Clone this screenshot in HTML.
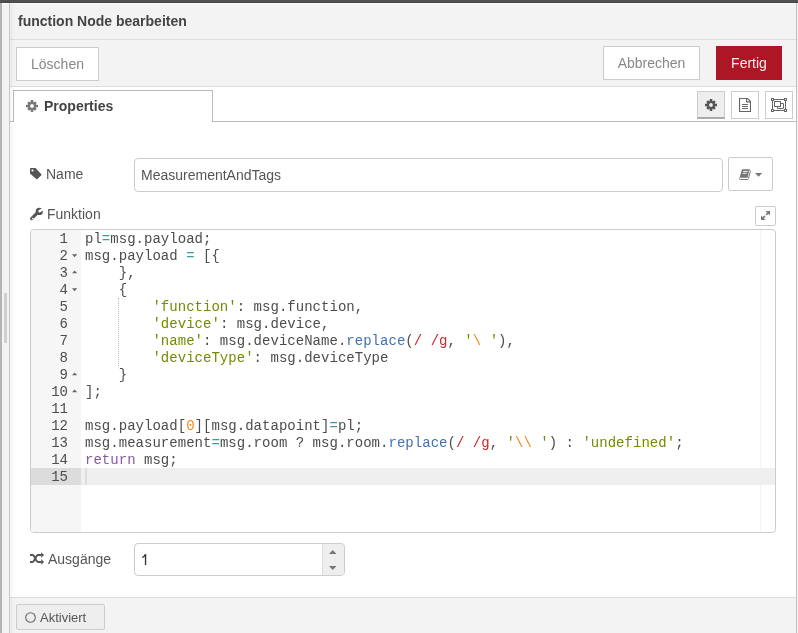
<!DOCTYPE html>
<html><head><meta charset="utf-8">
<style>
*{box-sizing:border-box}
html,body{margin:0;padding:0;width:798px;height:633px;overflow:hidden;background:#f3f3f3;font-family:"Liberation Sans",sans-serif;font-size:14px;color:#555}
.abs{position:absolute}
#topbar{left:0;top:0;width:798px;height:3px;background:#505050}
#lstrip{left:0;top:3px;width:2px;height:630px;background:#b4b4b4}
#lgrip{left:4px;top:293px;width:3px;height:50px;background:#cfcfcf}
#lborder{left:9px;top:3px;width:1px;height:630px;background:#c8c8c8}
#rborder{left:796px;top:3px;width:1px;height:630px;background:#c0c0c0}
#panel{left:10px;top:3px;width:786px;height:630px;background:#f3f3f3}
#hdr{left:10px;top:3px;width:786px;height:37px;border-bottom:1px solid #ddd;background:#f3f3f3}
#title{left:18px;top:13px;font-weight:bold;font-size:14px;color:#444;line-height:16px}
#tool{left:10px;top:40px;width:786px;height:47px;border-bottom:1px solid #ddd;background:#f3f3f3}
.btn{position:absolute;border:1px solid #ccc;background:#fff;color:#888;font-size:14px;text-align:center}
#body{left:10px;top:87px;width:786px;height:510px;background:#fff}
#footer{left:10px;top:597px;width:786px;height:36px;border-top:1px solid #ddd;background:#f3f3f3}
.lbl{position:absolute;font-size:14px;color:#555;line-height:16px;white-space:nowrap}
.tline{left:10px;top:121px;width:786px;height:1px;background:#bbb}
#tab{left:13px;top:90px;width:200px;height:32px;border:1px solid #bbb;border-bottom:none;background:#fff}
.tbtn{position:absolute;top:91px;width:28px;height:28px;border:1px solid #ccc;background:#fff}
.inp{position:absolute;border:1px solid #ccc;border-radius:4px;background:#fff}
#ed{left:30px;top:229px;width:746px;height:304px;border:1px solid #ccc;border-radius:4px;background:#fff;overflow:hidden}
#gut{left:0;top:0;width:50px;height:302px;background:#f6f6f6}
.code{position:absolute;left:54px;margin-top:1px;letter-spacing:0.028px;font-family:"Liberation Mono",monospace;font-size:14px;line-height:17px;color:#4d4d4c;white-space:pre}
.gn{position:absolute;left:0;margin-top:1px;width:37px;text-align:right;font-family:"Liberation Mono",monospace;font-size:14px;line-height:17px;color:#4d4d4c}
.s{color:#718c00}.e{color:#f5871f}.r{color:#c82829}.f{color:#4271ae}.o{color:#3e999f}.k{color:#8959a8}.n{color:#f5871f}
</style></head><body><div id="root" style="position:absolute;left:0;top:0;width:798px;height:633px;will-change:transform">
<div class="abs" id="panel"></div>
<div class="abs" id="topbar"></div>
<div class="abs" id="lstrip"></div>
<div class="abs" id="lgrip"></div>
<div class="abs" id="lborder"></div>
<div class="abs" id="rborder"></div>
<div class="abs" id="hdr"></div>
<div class="abs" id="title">function Node bearbeiten</div>
<div class="abs" id="tool"></div>
<div class="btn" style="left:16px;top:47px;width:83px;height:34px;line-height:32px">Löschen</div>
<div class="btn" style="left:603px;top:46px;width:97px;height:34px;line-height:32px">Abbrechen</div>
<div class="btn" style="left:716px;top:46px;width:66px;height:34px;line-height:32px;background:#ad1625;border-color:#ad1625;color:#eee">Fertig</div>
<div class="abs" id="body"></div>
<div class="abs tline"></div>
<div class="abs" id="tab"></div>
<svg class="abs" style="left:26px;top:100px" width="12" height="12" viewBox="0 0 12 12"><g fill="#777"><circle cx="6" cy="6" r="4.1"/><rect x="4.75" y="0" width="2.5" height="12"/><rect x="0" y="4.75" width="12" height="2.5"/><rect x="4.75" y="0.5" width="2.5" height="11" transform="rotate(45 6 6)"/><rect x="4.75" y="0.5" width="2.5" height="11" transform="rotate(-45 6 6)"/></g><circle cx="6" cy="6" r="1.9" fill="#fff"/></svg>
<div class="lbl" style="left:44px;top:98px;font-weight:bold;color:#444">Properties</div>

<div class="tbtn" style="left:697px;background:#eee;border-bottom:2px solid #aaa"></div>
<svg class="abs" style="left:705px;top:99px" width="12" height="12" viewBox="0 0 12 12"><g fill="#555"><circle cx="6" cy="6" r="4.1"/><rect x="4.75" y="0" width="2.5" height="12"/><rect x="0" y="4.75" width="12" height="2.5"/><rect x="4.75" y="0.5" width="2.5" height="11" transform="rotate(45 6 6)"/><rect x="4.75" y="0.5" width="2.5" height="11" transform="rotate(-45 6 6)"/></g><circle cx="6" cy="6" r="1.9" fill="#eee"/></svg>
<div class="tbtn" style="left:731px"></div>
<svg class="abs" style="left:739px;top:98px" width="12" height="14" viewBox="0 0 12 14"><g fill="none" stroke="#666" stroke-width="1.1"><path d="M0.55 0.55H8.7L11.45 3.3V13.45H0.55Z"/><path d="M7.6 0.55V3.9H11.45"/></g><g stroke="#666" stroke-width="1"><path d="M3 6.5H9M3 8.5H9M3 10.5H9"/></g></svg>
<div class="tbtn" style="left:765px"></div>
<svg class="abs" style="left:771px;top:98px" width="16" height="14" viewBox="0 0 16 14"><g fill="none" stroke="#666" stroke-width="1"><path d="M1.5 1.5H14.5M1.5 12.5H14.5M1.5 1.5V12.5M14.5 1.5V12.5"/><rect x="3.5" y="3.5" width="6" height="5"/><path d="M9.5 5.5H12.5V10.5H6.5V8.5"/></g><g fill="#fff" stroke="#666" stroke-width="1"><rect x="0.5" y="0.5" width="2" height="2"/><rect x="13.5" y="0.5" width="2" height="2"/><rect x="0.5" y="11.5" width="2" height="2"/><rect x="13.5" y="11.5" width="2" height="2"/></g></svg>

<!-- Name row -->
<svg class="abs" style="left:30px;top:168px" width="12" height="12" viewBox="0 0 12 12"><path d="M0 0.4Q0 0 0.4 0H5.5L11.8 6.8L6.9 11.6L0 5.5Z" fill="#555"/><circle cx="2.5" cy="2.5" r="1.1" fill="#fff"/></svg>
<div class="lbl" style="left:46px;top:166px">Name</div>
<div class="inp" style="left:134px;top:158px;width:589px;height:34px"></div>
<div class="lbl" style="left:141px;top:167px;color:#555">MeasurementAndTags</div>
<div class="btn" style="left:728px;top:157px;width:45px;height:34px;border-radius:2px"></div>
<svg class="abs" style="left:739px;top:169px" width="12" height="11" viewBox="0 0 12 11"><path d="M3 0.3H10.5L8.6 8.7H0.6Z" fill="#777"/><path d="M0.6 8.7C0 9.6 0.4 10.5 1.3 10.5H8.8L9.4 9.6" fill="none" stroke="#777" stroke-width="1"/><path d="M10.6 0.6C11.6 1.5 11.4 2.5 11.2 3.2L9.4 9.6" fill="none" stroke="#777" stroke-width="1"/><path d="M4.2 2.5H8.8M3.6 4.3H7.6" stroke="#fff" stroke-width="0.9"/></svg>
<svg class="abs" style="left:755px;top:173px" width="8" height="4" viewBox="0 0 8 4"><path d="M0 0H7.2L3.6 3.8Z" fill="#777"/></svg>

<!-- Funktion -->
<svg class="abs" style="left:30px;top:207px" width="14" height="14" viewBox="0 0 14 14"><path d="M1.6 11.6L6.8 6.4" stroke="#555" stroke-width="3" stroke-linecap="round"/><circle cx="9.3" cy="4.4" r="3.6" fill="#555"/><path d="M9.6 4.2L14.5 1.3" stroke="#fff" stroke-width="2.6" stroke-linecap="round"/><circle cx="2.5" cy="11.5" r="0.8" fill="#fff"/></svg>
<div class="lbl" style="left:47px;top:206px">Funktion</div>
<div class="btn" style="left:755px;top:206px;width:21px;height:20px;border-radius:2px"></div>
<svg class="abs" style="left:761px;top:211px" width="9" height="9" viewBox="0 0 9 9"><g fill="#777"><path d="M4.6 0H9V4.4Z"/><path d="M0 4.6V9H4.4Z"/></g><path d="M7.5 1.5L5.1 3.9M1.5 7.5L3.9 5.1" stroke="#777" stroke-width="1.6"/></svg>

<!-- editor -->
<div class="abs" id="ed">
  <div class="abs" id="gut"></div>
  <div class="abs" style="left:729px;top:0;width:1px;height:302px;background:#f3f3f3"></div>
  <div class="abs" style="left:0;top:238px;width:50px;height:17px;background:#dcdcdc"></div>
  <div class="abs" style="left:50px;top:238px;width:700px;height:17px;background:#efefef"></div>
  <div class="abs" style="left:87px;top:68px;width:0;height:68px;border-left:1px dotted #bbb"></div>
  <div class="abs" style="left:54px;top:238px;width:2px;height:17px;background:#dddddd"></div>
  <div class="gn" style="top:0px">1</div>
  <div class="code" style="top:0px">pl<span class="o">=</span>msg.payload;</div>
  <div class="gn" style="top:17px">2</div>
  <div class="code" style="top:17px">msg.payload <span class="o">=</span> [{</div>
  <div class="gn" style="top:34px">3</div>
  <div class="code" style="top:34px">    },</div>
  <div class="gn" style="top:51px">4</div>
  <div class="code" style="top:51px">    {</div>
  <div class="gn" style="top:68px">5</div>
  <div class="code" style="top:68px">        <span class="s">'function'</span>: msg.function,</div>
  <div class="gn" style="top:85px">6</div>
  <div class="code" style="top:85px">        <span class="s">'device'</span>: msg.device,</div>
  <div class="gn" style="top:102px">7</div>
  <div class="code" style="top:102px">        <span class="s">'name'</span>: msg.deviceName.<span class="f">replace</span>(<span class="r">/ /g</span>, <span class="s">'</span><span class="e">\ </span><span class="s">'</span>),</div>
  <div class="gn" style="top:119px">8</div>
  <div class="code" style="top:119px">        <span class="s">'deviceType'</span>: msg.deviceType</div>
  <div class="gn" style="top:136px">9</div>
  <div class="code" style="top:136px">    }</div>
  <div class="gn" style="top:153px">10</div>
  <div class="code" style="top:153px">];</div>
  <div class="gn" style="top:170px">11</div>
  <div class="code" style="top:170px"></div>
  <div class="gn" style="top:187px">12</div>
  <div class="code" style="top:187px">msg.payload[<span class="n">0</span>][msg.datapoint]<span class="o">=</span>pl;</div>
  <div class="gn" style="top:204px">13</div>
  <div class="code" style="top:204px">msg.measurement<span class="o">=</span>msg.room ? msg.room.<span class="f">replace</span>(<span class="r">/ /g</span>, <span class="s">'</span><span class="e">\\</span><span class="s"> '</span>) : <span class="s">'undefined'</span>;</div>
  <div class="gn" style="top:221px">14</div>
  <div class="code" style="top:221px"><span class="k">return</span> msg;</div>
  <div class="gn" style="top:238px">15</div>
  <div class="code" style="top:238px"></div>
  <svg class="abs" style="left:41px;top:24px" width="5" height="4" viewBox="0 0 5 4"><path d="M0 0.3H5.2L2.6 3.3Z" fill="#666"/></svg>
  <svg class="abs" style="left:41px;top:58px" width="5" height="4" viewBox="0 0 5 4"><path d="M0 0.3H5.2L2.6 3.3Z" fill="#666"/></svg>
  <svg class="abs" style="left:41px;top:40px" width="5" height="4" viewBox="0 0 5 4"><path d="M0 3.3H5.2L2.6 0.5Z" fill="#666"/></svg>
  <svg class="abs" style="left:41px;top:142px" width="5" height="4" viewBox="0 0 5 4"><path d="M0 3.3H5.2L2.6 0.5Z" fill="#666"/></svg>
  <svg class="abs" style="left:41px;top:159px" width="5" height="4" viewBox="0 0 5 4"><path d="M0 3.3H5.2L2.6 0.5Z" fill="#666"/></svg>
</div>

<!-- Ausgänge -->
<svg class="abs" style="left:30px;top:552px" width="14" height="13" viewBox="0 0 14 13"><g fill="none" stroke="#555" stroke-width="2"><path d="M0 3H2.5C5 3 5.5 9.9 8 9.9H11.5"/><path d="M0 9.9H2.5C5 9.9 5.5 3 8 3H11.5"/></g><g fill="#555"><path d="M11.2 0.2L14 3L11.2 5.8Z"/><path d="M11.2 7.1L14 9.9L11.2 12.7Z"/></g></svg>
<div class="lbl" style="left:48px;top:551px">Ausgänge</div>
<div class="inp" style="left:134px;top:543px;width:211px;height:33px"></div>
<div class="abs" style="left:322px;top:544px;width:22px;height:31px;background:#eee;border-left:1px solid #ddd;border-radius:0 3px 3px 0"></div>
<svg class="abs" style="left:329px;top:550px" width="8" height="21" viewBox="0 0 8 21"><g fill="#777"><path d="M0 4H7.5L3.75 0Z"/><path d="M0 16H7.5L3.75 20Z"/></g></svg>
<svg class="abs" style="left:141px;top:554px" width="7" height="11" viewBox="0 0 7 11"><path d="M4.55 0.2V11" stroke="#333" stroke-width="1.35"/><path d="M1.1 3.5C2.6 2.9 3.9 1.9 4.5 0.2" fill="none" stroke="#333" stroke-width="1.2"/></svg>

<div class="abs" id="footer"></div>
<div class="abs" style="left:10px;top:3px;width:5px;height:630px;background:linear-gradient(to right,rgba(0,0,0,0.045),rgba(0,0,0,0))"></div>
<div class="abs" style="left:0;top:2px;width:798px;height:1px;background:#474747"></div>
<div class="abs" style="left:2px;top:3px;width:7px;height:1px;background:#fff"></div>
<div class="abs" style="left:10px;top:3px;width:786px;height:1px;background:#f9f9f9"></div>
<div class="abs" style="left:16px;top:604px;width:89px;height:26px;border:1px solid #ccc;border-radius:2px;background:#eee"></div>
<svg class="abs" style="left:25px;top:612px" width="11" height="11" viewBox="0 0 11 11"><circle cx="5.5" cy="5.5" r="4.8" fill="none" stroke="#666" stroke-width="1.1"/></svg>
<div class="lbl" style="left:40px;top:610px;font-size:13px;color:#555">Aktiviert</div>
</div></body></html>
